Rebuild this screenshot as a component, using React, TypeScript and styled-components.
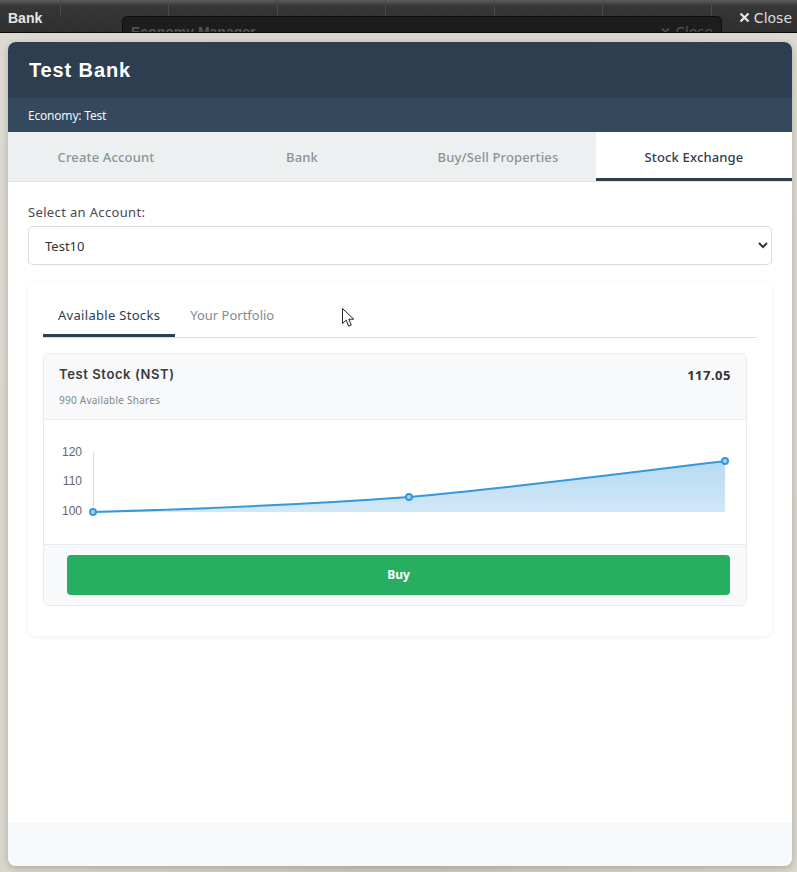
import React from "react";
import styled, { createGlobalStyle } from "styled-components";

const Global = createGlobalStyle`
  html, body { margin: 0; padding: 0; }
  body { font-family: "Noto Sans", "Open Sans", "Liberation Sans", sans-serif; background: #d8d6ca; }
  * { box-sizing: border-box; }
`;

const Page = styled.div`
  width: 797px;
  height: 872px;
  overflow: hidden;
  display: flex;
  flex-direction: column;
  background: radial-gradient(ellipse at 50% 100%, #c9c7b9 0%, #d6d4c8 55%, #dcdad0 100%);
`;

const TopBar = styled.div`
  position: relative;
  flex: 0 0 33px;
  height: 33px;
  overflow: hidden;
  display: flex;
  align-items: center;
  justify-content: space-between;
  padding: 3px 5px 0 8px;
  border-bottom: 1px solid #0c0c0c;
  background:
    repeating-linear-gradient(45deg, rgba(255, 255, 255, 0.025) 0 1px, transparent 1px 2px),
    linear-gradient(#5a5a5a 0, #343434 6px, #2d2d2d 100%);
`;

const GridLines = styled.div`
  position: absolute;
  inset: 0 0 auto 0;
  height: 16px;
  background: repeating-linear-gradient(90deg, transparent 0, transparent 60px, #4a4a4a 60px, #4a4a4a 61px, transparent 61px, transparent 108.5px);
`;

const BackWindow = styled.div`
  position: absolute;
  left: 122px;
  top: 16px;
  width: 600px;
  height: 40px;
  background: #1d1d1d;
  border: 1px solid #0e0e0e;
  border-radius: 5px 5px 0 0;
  display: flex;
  justify-content: space-between;
  padding: 7px 8px 0 8px;
  color: #525252;
  font: bold 14px "Liberation Sans", Arial, sans-serif;
`;

const BackClose = styled.span`
  font: 400 13.8px "DejaVu Sans", sans-serif;
`;

const BarTitle = styled.span`
  position: relative;
  color: #e6e6e6;
  font: bold 14px "Liberation Sans", Arial, sans-serif;
`;

const BarClose = styled.span`
  position: relative;
  color: #dcdcdc;
  font: 400 14px "DejaVu Sans", sans-serif;
  display: flex;
  align-items: center;
  gap: 4px;
`;

const Modal = styled.div`
  flex: 1;
  margin: 9px 5px 6px 8px;
  display: flex;
  flex-direction: column;
  background: #fff;
  border-radius: 8px;
  overflow: hidden;
  box-shadow: 0 2px 6px rgba(0, 0, 0, 0.2);
`;

const Header = styled.div`
  height: 56px;
  background: #2c3e50;
  color: #fff;
  display: flex;
  align-items: center;
  padding-left: 21px;
  font: bold 20px "Liberation Sans", Arial, sans-serif;
  letter-spacing: 0.88px;
`;

const SubHeader = styled.div`
  height: 34px;
  background: #34495e;
  color: #f2f4f5;
  display: flex;
  align-items: center;
  padding-left: 20px;
  font-size: 12px;
  letter-spacing: -0.2px;
`;

const MainTabs = styled.div`
  height: 50px;
  display: grid;
  grid-template-columns: repeat(4, 1fr);
  background: #ecf0f1;
  border-bottom: 1px solid #dfe3e5;
`;

const MainTab = styled.div<{ $active?: boolean }>`
  display: flex;
  align-items: center;
  justify-content: center;
  font-size: 13px;
  font-weight: 500;
  letter-spacing: 0.15px;
  color: ${(p) => (p.$active ? "#2c3e50" : "#8b9496")};
  background: ${(p) => (p.$active ? "#fff" : "transparent")};
  border-bottom: ${(p) => (p.$active ? "3px solid #2c3e50" : "0")};
  height: ${(p) => (p.$active ? "49px" : "auto")};
  padding-top: ${(p) => (p.$active ? "3px" : "0")};
`;

const Body = styled.div`
  flex: 1;
  padding: 20px 20px 0;
  display: flex;
  flex-direction: column;
`;

const Label = styled.label`
  font-size: 13px;
  font-weight: 400;
  letter-spacing: 0.35px;
  line-height: 20px;
  color: #46494b;
  margin-bottom: 4px;
`;

const Select = styled.select`
  height: 39px;
  width: 100%;
  padding: 0 12px;
  border: 1px solid #d9dcdf;
  border-radius: 5px;
  background: #fff;
  color: #333;
  font: 400 13px "Noto Sans", sans-serif;
`;

const Panel = styled.div`
  position: relative;
  margin-top: 18px;
  height: 353px;
  padding: 10px 15px;
  background: #fff;
  border-radius: 8px;
  box-shadow: 0 1px 5px rgba(0, 0, 0, 0.07);
`;

const SubTabs = styled.div`
  display: flex;
  height: 45px;
  border-bottom: 1px solid #dcdfe1;
`;

const SubTab = styled.div<{ $active?: boolean }>`
  height: 44px;
  padding: ${(p) => (p.$active ? "2px" : "0")} 15px 0;
  display: flex;
  align-items: center;
  font-size: 13px;
  color: ${(p) => (p.$active ? "#2c3e50" : "#7f8c8d")};
  font-weight: 400;
  letter-spacing: ${(p) => (p.$active ? "0.3px" : "0")};
  border-bottom: ${(p) => (p.$active ? "3px solid #2c3e50" : "0")};
`;

const StockCard = styled.div`
  margin-top: 15px;
  margin-right: 10px;
  height: 253px;
  border: 1px solid #e9ebed;
  border-radius: 6px;
  overflow: hidden;
  display: flex;
  flex-direction: column;
`;

const StockHead = styled.div`
  height: 66px;
  flex: none;
  background: #f8f9fa;
  border-bottom: 1px solid #e9ebed;
  padding: 11px 15px 0;
  display: flex;
  justify-content: space-between;
`;

const StockName = styled.div`
  font: 600 13px/18px "Inter", sans-serif;
  color: #3a3a3a;
  letter-spacing: 0.6px;
`;

const StockShares = styled.div`
  font-size: 10px;
  letter-spacing: 0.25px;
  line-height: 14px;
  color: #808789;
  margin-top: 10px;
`;

const StockPrice = styled.div`
  font-size: 13px;
  font-weight: 700;
  line-height: 20px;
  color: #333;
  letter-spacing: 0.5px;
`;

const ChartArea = styled.div`
  flex: 1;
  background: #fff;
`;

const ChartSvg = styled.svg`
  display: block;
`;

const StockFoot = styled.div`
  height: 61px;
  flex: none;
  background: #f8f9fa;
  border-top: 1px solid #e9ebed;
  padding: 10px 16px 10px 23px;
`;

const BuyButton = styled.button`
  width: 100%;
  height: 40px;
  padding: 0 0 2px;
  border: 0;
  border-radius: 4px;
  background: #27ae60;
  color: #fff;
  font: 700 12px "Noto Sans", sans-serif;
`;

const Cursor = styled.svg`
  position: absolute;
  left: 313px;
  top: 24px;
`;

const Footer = styled.div`
  height: 43px;
  flex: none;
  background: #f8f9fa;
`;

/* Chart coordinates are relative to the card's inner area: origin at (44, 420) on the page */
const X = (px: number) => px - 44;
const Y = (py: number) => py - 420;

const linePath = `M${X(93)} ${Y(512)} C${X(200)} ${Y(509)} ${X(300)} ${Y(505)} ${X(409)} ${Y(497)} C${X(520)} ${Y(487)} ${X(620)} ${Y(474)} ${X(725)} ${Y(461)}`;
const areaPath = `${linePath} L${X(725)} ${Y(512)} L${X(93)} ${Y(512)} Z`;

const Dot = ({ cx, cy }: { cx: number; cy: number }) => (
  <circle cx={X(cx)} cy={Y(cy)} r="3" fill="#a9d2ee" stroke="#3498db" strokeWidth="2" />
);

const Tick = ({ y, children }: { y: number; children: React.ReactNode }) => (
  <text x={X(82)} y={Y(y) + 4} textAnchor="end" fontFamily="Liberation Sans, Arial, sans-serif" fontSize="12" fill="#666">
    {children}
  </text>
);

export default function App() {
  return (
    <Page>
      <Global />
      <TopBar>
        <GridLines />
        <BackWindow>
          <span>Economy Manager</span>
          <BackClose>✕ Close</BackClose>
        </BackWindow>
        <BarTitle>Bank</BarTitle>
        <BarClose>
          <svg width="11" height="11" viewBox="0 0 11 11">
            <path d="M1.5 1.5l8 8M9.5 1.5l-8 8" stroke="#e8e8e8" strokeWidth="2.2" />
          </svg>
          Close
        </BarClose>
      </TopBar>
      <Modal>
        <Header>Test Bank</Header>
        <SubHeader>Economy: Test</SubHeader>
        <MainTabs>
          <MainTab>Create Account</MainTab>
          <MainTab>Bank</MainTab>
          <MainTab>Buy/Sell Properties</MainTab>
          <MainTab $active>Stock Exchange</MainTab>
        </MainTabs>
        <Body>
          <Label>Select an Account:</Label>
          <Select defaultValue="Test10">
            <option>Test10</option>
          </Select>
          <Panel>
            <SubTabs>
              <SubTab $active>Available Stocks</SubTab>
              <SubTab>Your Portfolio</SubTab>
            </SubTabs>
            <Cursor width="16" height="22" viewBox="0 0 16 22">
              <path d="M1.5 1.5v15l3.7-3.4 2.5 6 2.6-1.1-2.5-5.8h5z" fill="#fff" stroke="#222" strokeWidth="1" strokeLinejoin="round" />
            </Cursor>
            <StockCard>
              <StockHead>
                <div>
                  <StockName>Test Stock (NST)</StockName>
                  <StockShares>990 Available Shares</StockShares>
                </div>
                <StockPrice>117.05</StockPrice>
              </StockHead>
              <ChartArea>
                <ChartSvg width="702" height="124" viewBox="0 0 702 124">
                  <defs>
                    <linearGradient id="areaFill" x1="0" y1="0" x2="0" y2="1">
                      <stop offset="0" stopColor="#3498db" stopOpacity="0.36" />
                      <stop offset="1" stopColor="#3498db" stopOpacity="0.22" />
                    </linearGradient>
                  </defs>
                  <line x1={X(93.5)} y1={Y(452)} x2={X(93.5)} y2={Y(512)} stroke="#ddd" />
                  <Tick y={452}>120</Tick>
                  <Tick y={481}>110</Tick>
                  <Tick y={511}>100</Tick>
                  <path d={areaPath} fill="url(#areaFill)" />
                  <path d={linePath} fill="none" stroke="#3498db" strokeWidth="2" />
                  <Dot cx={93} cy={512} />
                  <Dot cx={409} cy={497} />
                  <Dot cx={725} cy={461} />
                </ChartSvg>
              </ChartArea>
              <StockFoot>
                <BuyButton>Buy</BuyButton>
              </StockFoot>
            </StockCard>
          </Panel>
        </Body>
        <Footer />
      </Modal>
    </Page>
  );
}
